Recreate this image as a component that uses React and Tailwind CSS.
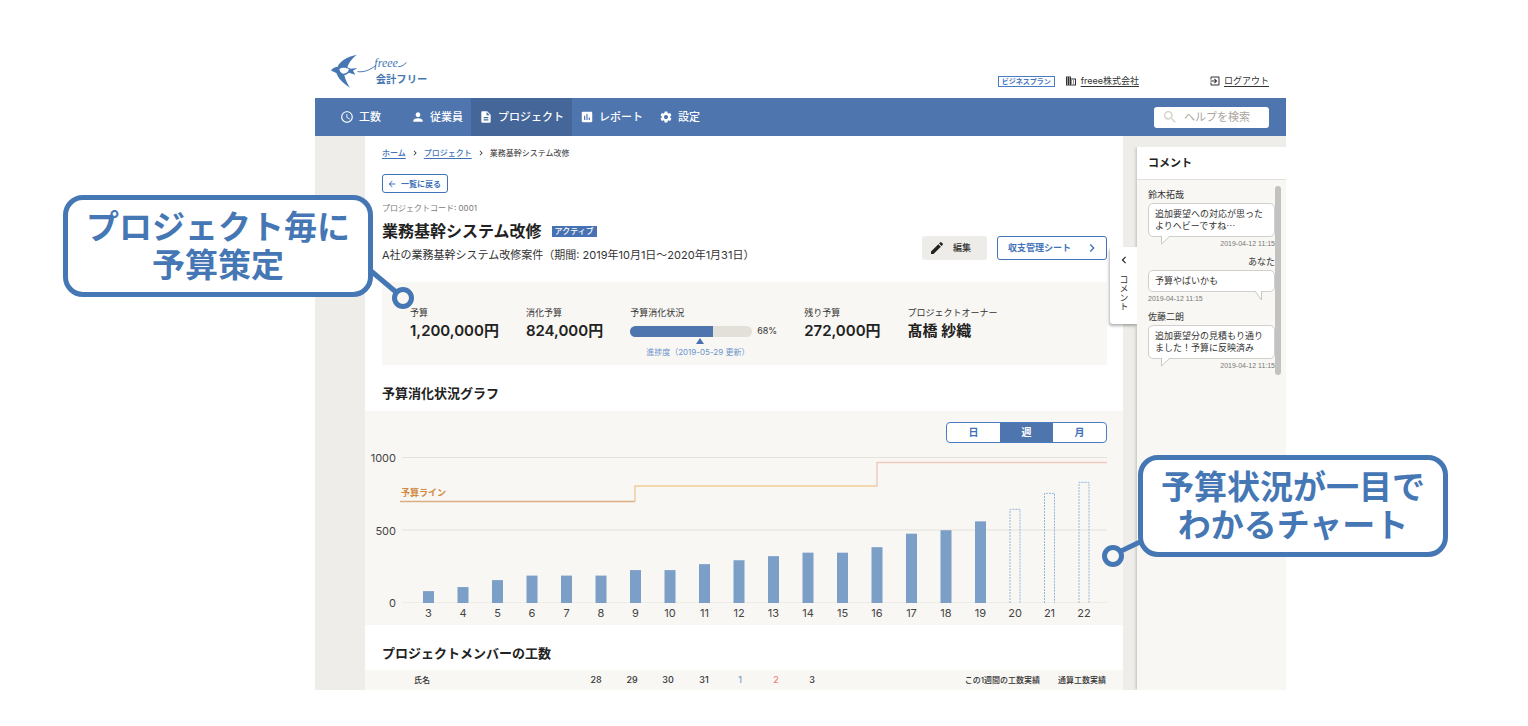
import React, { useState } from 'react';
import {
    MdAccessTime,
    MdArrowBack,
    MdAssessment,
    MdChevronLeft,
    MdChevronRight,
    MdDescription,
    MdDomain,
    MdEdit,
    MdExitToApp,
    MdPerson,
    MdSearch,
    MdSettings,
} from 'react-icons/md';

const NAV_ITEMS = [
    { label: '工数', Icon: MdAccessTime },
    { label: '従業員', Icon: MdPerson },
    { label: 'プロジェクト', Icon: MdDescription, active: true },
    { label: 'レポート', Icon: MdAssessment },
    { label: '設定', Icon: MdSettings },
];

const WEEKS = [
    { week: 3, value: 82 },
    { week: 4, value: 110 },
    { week: 5, value: 158 },
    { week: 6, value: 189 },
    { week: 7, value: 189 },
    { week: 8, value: 189 },
    { week: 9, value: 227 },
    { week: 10, value: 227 },
    { week: 11, value: 268 },
    { week: 12, value: 295 },
    { week: 13, value: 323 },
    { week: 14, value: 347 },
    { week: 15, value: 347 },
    { week: 16, value: 385 },
    { week: 17, value: 478 },
    { week: 18, value: 502 },
    { week: 19, value: 563 },
    { week: 20, value: 646, forecast: true },
    { week: 21, value: 756, forecast: true },
    { week: 22, value: 832, forecast: true },
];

const COMMENTS = [
    { name: '鈴木拓哉', text: '追加要望への対応が思ったよりヘビーですね…', date: '2019-04-12 11:15' },
    { name: 'あなた', text: '予算やばいかも', date: '2019-04-12 11:15', mine: true },
    { name: '佐藤二朗', text: '追加要望分の見積もり通りました！予算に反映済み', date: '2019-04-12 11:15' },
];

export default function App() {
    return (
        <div className="bg-white text-[#333] font-[family-name:Inter,'Noto_Sans_CJK_JP',sans-serif]">
            <div className="relative mr-[242px] ml-[315px]">
                <Header />
                <GlobalNav />
                <div className="flex bg-[#eeede9]">
                    <main className="mr-3.5 ml-[50px] min-w-0 flex-1 bg-white">
                        <ProjectHead />
                        <SectionTitle>予算消化状況グラフ</SectionTitle>
                        <BudgetChart />
                        <SectionTitle>プロジェクトメンバーの工数</SectionTitle>
                        <MemberTable />
                    </main>
                    <CommentPanel />
                </div>

                <Callout
                    lines={['プロジェクト毎に', '予算策定']}
                    className="top-[195px] right-[calc(100%-58px)]"
                />
                <svg className="absolute top-[264px] left-[50px]" width="52" height="48" fill="none" stroke="#4577b5">
                    <path d="M6 7 L31 28" strokeWidth="5" />
                    <circle cx="38" cy="34" r="8.5" strokeWidth="5" />
                </svg>
                <Callout
                    lines={['予算状況が一目で', 'わかるチャート']}
                    className="top-[455px] left-[calc(100%-148px)]"
                />
                <svg className="absolute top-[530px] right-[138px]" width="50" height="40" fill="none" stroke="#4577b5">
                    <path d="M44 11 L21 22" strokeWidth="5" />
                    <circle cx="15" cy="26" r="8.5" strokeWidth="5" />
                </svg>
            </div>
        </div>
    );
}

function SectionTitle({ children }) {
    return <h2 className="mt-[18px] pr-4 pl-[17px] text-[13px] leading-5 font-bold text-[#222]">{children}</h2>;
}

function Header() {
    return (
        <header className="flex items-end justify-between pt-12 pr-[17px] pb-2 pl-2.5">
            <a href="#" aria-label="会計フリー" className="block">
                <Logo />
            </a>
            <div className="mb-[3px] flex h-3 items-center text-[9px] leading-3">
                <span className="border border-[#4a7cc4] px-[3px] text-[7px] leading-[9px] font-bold text-[#3f76c4]">
                    ビジネスプラン
                </span>
                <MdDomain className="mr-1 ml-2.5 size-3 text-[#333]" />
                <a href="#" className="underline underline-offset-2">freee株式会社</a>
                <MdExitToApp className="mr-[3px] ml-[70px] size-3 text-[#333]" />
                <a href="#" className="underline underline-offset-2">ログアウト</a>
            </div>
        </header>
    );
}

function Logo() {
    return (
        <svg className="block" width="110" height="42" viewBox="0 0 330 126" fill="#4777b3">
            {/* swallow: wings, body and forked tail */}
            <path d="M18 67 C24 59 31 57 38 56 C46 38 64 27 95 20 C81 32 71 44 67 58 L77 62 L97 60 L84 68 L91 80 L72 74 C66 79 62 81 58 81 C61 95 67 107 75 119 C54 106 40 92 34 75 C29 73 23 71 18 67 Z" />
            <path d="M43 63 C51 58 64 58 72 64 C70 73 62 78 54 77 C48 75 44 70 43 63 Z" fill="#fff" />
            <g fill="none" stroke="#4777b3" strokeWidth="3" strokeLinecap="round">
                <path d="M99 71 C116 73 132 68 152 53" />
                <path d="M221 56 C231 56 239 50 243 44" />
            </g>
            <text x="148" y="58" fontSize="36" fontStyle="italic" fontFamily="'Liberation Serif', serif">freee</text>
            <text x="152" y="106" fontSize="31" fontWeight="700" fontFamily="'Noto Sans CJK JP', sans-serif">会計フリー</text>
        </svg>
    );
}

function GlobalNav() {
    return (
        <nav className="flex h-[38px] items-center justify-between bg-[#4e75ae] px-[17px] text-white">
            <ul className="flex h-full">
                {NAV_ITEMS.map(({ label, Icon, active }) => (
                    <li key={label} className={active ? 'bg-[#446699]' : 'first:min-w-[71px]'}>
                        <a href="#" className="flex h-full items-center gap-[5px] px-2 text-[11px] font-medium whitespace-nowrap">
                            <Icon className="size-[14px] shrink-0" />
                            {label}
                        </a>
                    </li>
                ))}
            </ul>
            <label className="flex h-[21px] w-[115px] items-center rounded-[3px] bg-white pl-2">
                <MdSearch className="size-4 shrink-0 text-[#d4d0c8]" />
                <input
                    type="search"
                    aria-label="ヘルプを検索"
                    placeholder="ヘルプを検索"
                    className="ml-1.5 w-full min-w-0 bg-transparent text-[11px] text-[#333] placeholder:text-[#aaa59d] focus:outline-none"
                />
            </label>
        </nav>
    );
}

function ProjectHead() {
    return (
        <div className="pt-[11px] pr-4 pl-[17px]">
            <div className="flex items-center gap-1 text-[8px] leading-3">
                <a href="#" className="font-medium text-[#3f72b8] underline underline-offset-2">ホーム</a>
                <MdChevronRight className="size-2.5" />
                <a href="#" className="font-medium text-[#3f72b8] underline underline-offset-2">プロジェクト</a>
                <MdChevronRight className="size-2.5" />
                <span>業務基幹システム改修</span>
            </div>

            <button className="mt-[15px] flex h-[19px] items-center gap-1 rounded-[3px] border border-[#3f72b8] pr-1.5 pl-1 text-[8px] font-bold text-[#3f72b8]">
                <MdArrowBack className="size-2.5" />
                一覧に戻る
            </button>

            <p className="mt-[9px] text-[8px] leading-3 text-[#777]">プロジェクトコード: 0001</p>

            <div className="mt-[5px] flex items-end justify-between">
                <div>
                    <div className="flex items-center gap-2.5">
                        <h1 className="text-[16px] leading-6 font-bold text-[#222]">業務基幹システム改修</h1>
                        <span className="bg-[#4671b2] px-[3px] text-[8px] leading-[11px] font-medium text-white">アクティブ</span>
                    </div>
                    <p className="mt-1 text-[11px] leading-4">
                        A社の業務基幹システム改修案件（期間: 2019年10月1日〜2020年1月31日）
                    </p>
                </div>
                <div className="flex gap-2.5 pb-[3px] text-[9px]">
                    <button className="flex h-6 items-center gap-2 rounded-[3px] bg-[#edece8] pr-4 pl-[7px] font-medium">
                        <MdEdit className="size-4 text-[#222]" />
                        編集
                    </button>
                    <button className="flex h-6 w-[110px] items-center justify-between rounded-[3px] border border-[#3f72b8] pr-1.5 pl-2.5 font-bold text-[#3f72b8]">
                        収支管理シート
                        <MdChevronRight className="size-4" />
                    </button>
                </div>
            </div>

            <dl className="mt-[19px] flex gap-[27px] bg-[#f8f7f3] px-7 pt-[25px] pb-[7px]">
                <Stat label="予算">1,200,000円</Stat>
                <Stat label="消化予算">824,000円</Stat>
                <div>
                    <dt className="text-[9px] leading-3">予算消化状況</dt>
                    <dd className="mt-0.5">
                        <BudgetProgress percent={68} />
                    </dd>
                </div>
                <Stat label="残り予算">272,000円</Stat>
                <Stat label="プロジェクトオーナー">髙橋 紗織</Stat>
            </dl>
        </div>
    );
}

function Stat({ label, children }) {
    return (
        <div>
            <dt className="text-[9px] leading-3">{label}</dt>
            <dd className="mt-0.5 text-[15px] leading-5 font-semibold whitespace-nowrap text-[#222]">{children}</dd>
        </div>
    );
}

function BudgetProgress({ percent }) {
    return (
        <div>
            <div className="flex h-5 items-center gap-[5px]">
                <div className="relative w-[122px]">
                    <div className="h-[11px] overflow-hidden rounded-full bg-[#e2e0d8]">
                        <div className="h-full bg-[#4e75ae]" style={{ width: `${percent}%` }} />
                    </div>
                    {/* marker for how far the project itself has come */}
                    <svg className="absolute top-3 left-[66px]" width="8" height="6" fill="#4671b2">
                        <path d="M4 0 L8 6 L0 6 Z" />
                    </svg>
                </div>
                <span className="text-[9px]">{percent}%</span>
            </div>
            <p className="mt-[5px] pl-4 text-[8px] leading-3 text-[#6c94cc]">進捗度（2019-05-29 更新）</p>
        </div>
    );
}

function BudgetChart() {
    const [unit, setUnit] = useState('週');
    const baseY = 160;
    const toY = (value) => baseY - (value * 145) / 1000;

    return (
        <section className="mt-2 bg-[#f8f7f3] pt-[11px]">
            <div className="flex justify-end pr-4">
                <div className="flex h-[21px] overflow-hidden rounded-[4px] border border-[#4a7cc0] bg-white">
                    {['日', '週', '月'].map((name) => (
                        <button
                            key={name}
                            aria-pressed={unit === name}
                            onClick={() => setUnit(name)}
                            className={`w-[53px] text-[10px] leading-[19px] font-bold ${
                                unit === name ? 'bg-[#4e75ae] text-white' : 'text-[#3f72b8]'
                            }`}
                        >
                            {name}
                        </button>
                    ))}
                </div>
            </div>
            <svg className="block w-full" viewBox="0 0 758 182" fontSize="11" fill="#444">
                {[1000, 500, 0].map((value) => (
                    <g key={value}>
                        <path d={`M37 ${toY(value) - 0.5} H742`} stroke={value ? '#e3e1da' : '#eeece6'} />
                        <text x="31" y={toY(value) + 4} textAnchor="end">{value}</text>
                    </g>
                ))}
                {WEEKS.map(({ week, value, forecast }, i) => {
                    const x = 63.5 + i * 34.5;
                    const y = toY(value);
                    return (
                        <g key={week}>
                            {forecast ? (
                                <path
                                    d={`M${x - 5} ${baseY} V${y} H${x + 5} V${baseY}`}
                                    fill="none"
                                    stroke="#94b8da"
                                    strokeDasharray="2 1"
                                />
                            ) : (
                                <rect x={x - 5.5} y={y} width="11" height={baseY - y} fill="#7c9fc8" />
                            )}
                            <text x={x} y="174" textAnchor="middle">{week}</text>
                        </g>
                    );
                })}
                <g fill="none" strokeWidth="1.4">
                    <path d="M35 58.5 H270" stroke="#dcae84" />
                    <path d="M270 59 V43 H512" stroke="#eecb98" />
                    <path d="M512 43.5 V19.5 H742" stroke="#edcabb" />
                </g>
                <text x="36" y="53" fontSize="9" fontWeight="700" fill="#d0893f">予算ライン</text>
            </svg>
        </section>
    );
}

function MemberTable() {
    return (
        <table className="mt-[7px] w-full table-fixed bg-[#f8f7f3] text-[8px]">
            <thead>
                <tr className="h-5 [&>th]:p-0 [&>th]:font-medium">
                    <th className="text-left">
                        <span className="pl-[49px]">氏名</span>
                    </th>
                    <th className="w-9 text-[9px]">28</th>
                    <th className="w-9 text-[9px]">29</th>
                    <th className="w-9 text-[9px]">30</th>
                    <th className="w-9 text-[9px]">31</th>
                    <th className="w-9 text-[9px] text-[#7c9fd0]">1</th>
                    <th className="w-9 text-[9px] text-[#ec7f7f]">2</th>
                    <th className="w-9 text-[9px]">3</th>
                    <th className="w-[210px] text-right">この1週間の工数実績</th>
                    <th className="w-[83px] text-right">
                        <span className="pr-[17px]">通算工数実績</span>
                    </th>
                </tr>
            </thead>
        </table>
    );
}

function CommentPanel() {
    return (
        <aside className="relative mt-[11px] w-[149px] shrink-0 bg-[#f8f7f3] shadow-[-1px_0_3px_rgba(0,0,0,0.2)] [clip-path:inset(0_0_0_-40px)]">
            <h2 className="border-b border-[#e2e0da] bg-white pl-[11px] text-[11px] leading-8 font-bold text-[#222]">コメント</h2>
            <ul className="space-y-2 px-[11px] pt-[9px]">
                {COMMENTS.map((comment) => (
                    <Comment key={comment.name} {...comment} />
                ))}
            </ul>
            <div className="absolute top-[39px] right-[5px] h-[189px] w-1.5 rounded-full bg-[#c2c2c1]" />
            <button className="absolute top-[100px] right-full flex h-[77px] w-[27px] flex-col items-center gap-2 rounded-l-[3px] bg-white pt-1.5 shadow-[-1px_2px_3px_rgba(0,0,0,0.3)] [clip-path:inset(-4px_0_-6px_-6px)]">
                <MdChevronLeft className="size-3.5 shrink-0 text-[#222]" />
                <span className="text-[9px] leading-3 [writing-mode:vertical-rl]">コメント</span>
            </button>
        </aside>
    );
}

function Comment({ name, text, date, mine }) {
    return (
        <li className="text-[9px] leading-3">
            <p className={mine ? 'text-right' : ''}>{name}</p>
            <div className="relative mt-0.5 rounded-[5px] border border-[#d0cfcc] bg-white py-1 pr-2 pl-1.5 font-[family-name:'Noto_Sans_CJK_JP',sans-serif]">
                {text}
                {mine ? (
                    <svg className="absolute top-full right-[11px]" width="9" height="10" fill="#fff" stroke="#c8c7c4">
                        <path d="M1 0 L7.5 9 V0" />
                    </svg>
                ) : (
                    <svg className="absolute top-full left-3" width="11" height="9" fill="#fff" stroke="#c8c7c4">
                        <path d="M0.5 0 V8 L9 0" />
                    </svg>
                )}
            </div>
            <p
                className={`mt-[3px] font-[family-name:'Liberation_Sans',sans-serif] text-[7px] leading-2 text-[#777] ${
                    mine ? '' : 'text-right'
                }`}
            >
                {date}
            </p>
        </li>
    );
}

function Callout({ lines, className }) {
    return (
        <p
            className={`absolute w-[310px] rounded-[20px] border-[5px] border-[#4577b5] bg-white py-2 text-center text-[33px] leading-[38px] font-bold whitespace-nowrap text-[#4577b5] ${className}`}
        >
            {lines.map((line) => (
                <span key={line} className="block">{line}</span>
            ))}
        </p>
    );
}
